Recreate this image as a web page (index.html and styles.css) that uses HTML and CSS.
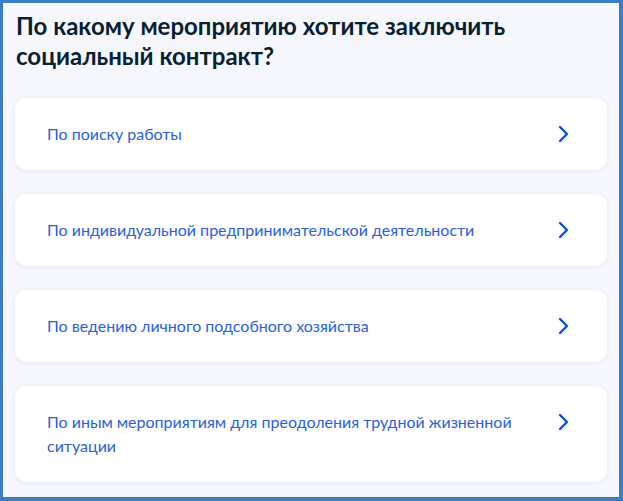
FILE: index.html
```html
<!DOCTYPE html>
<html lang="ru">
<head>
<meta charset="utf-8">
<title>Социальный контракт</title>
<link rel="stylesheet" href="styles.css">
</head>
<body>
<div class="frame">
  <h1 class="question">По какому мероприятию хотите заключить социальный контракт?</h1>
  <div class="options">
    <a class="option" href="#">
      <span class="option-text">По поиску работы</span>
      <svg class="chevron" viewBox="0 0 24 24" width="24" height="24"><path d="M9 5l7 7-7 7"/></svg>
    </a>
    <a class="option" href="#">
      <span class="option-text">По индивидуальной предпринимательской деятельности</span>
      <svg class="chevron" viewBox="0 0 24 24" width="24" height="24"><path d="M9 5l7 7-7 7"/></svg>
    </a>
    <a class="option" href="#">
      <span class="option-text">По ведению личного подсобного хозяйства</span>
      <svg class="chevron" viewBox="0 0 24 24" width="24" height="24"><path d="M9 5l7 7-7 7"/></svg>
    </a>
    <a class="option" href="#">
      <span class="option-text">По иным мероприятиям для преодоления трудной жизненной ситуации</span>
      <svg class="chevron" viewBox="0 0 24 24" width="24" height="24"><path d="M9 5l7 7-7 7"/></svg>
    </a>
  </div>
</div>
</body>
</html>
```

FILE: styles.css
```css
html, body {
  margin: 0;
  padding: 0;
}

body {
  font-family: Lato, "Noto Sans", sans-serif;
  background: #f5f7fc;
}

.frame {
  box-sizing: border-box;
  width: 623px;
  height: 501px;
  border: 3px solid #3b7cc2;
  border-right-width: 4px;
  border-bottom-width: 4px;
  background: #f5f7fc;
  padding: 8px 12px 0;
  overflow: hidden;
}

.question {
  margin: 0 0 27px;
  padding-left: 1px;
  font-size: 24px;
  line-height: 30px;
  font-weight: 700;
  color: #0b1f33;
  max-width: 540px;
}

.options {
  display: flex;
  flex-direction: column;
  gap: 24px;
}

.option {
  display: flex;
  align-items: flex-start;
  gap: 24px;
  padding: 24px 32px;
  background: #ffffff;
  border-radius: 12px;
  box-shadow: 0 1px 4px rgba(200, 210, 230, 0.45);
  text-decoration: none;
}

.option-text {
  flex: 1;
  font-size: 16px;
  line-height: 24px;
  color: #2a5fd6;
}

.chevron {
  flex: none;
  fill: none;
  stroke: #0d4cd3;
  stroke-width: 2.4;
  stroke-linecap: round;
  stroke-linejoin: round;
}
```
